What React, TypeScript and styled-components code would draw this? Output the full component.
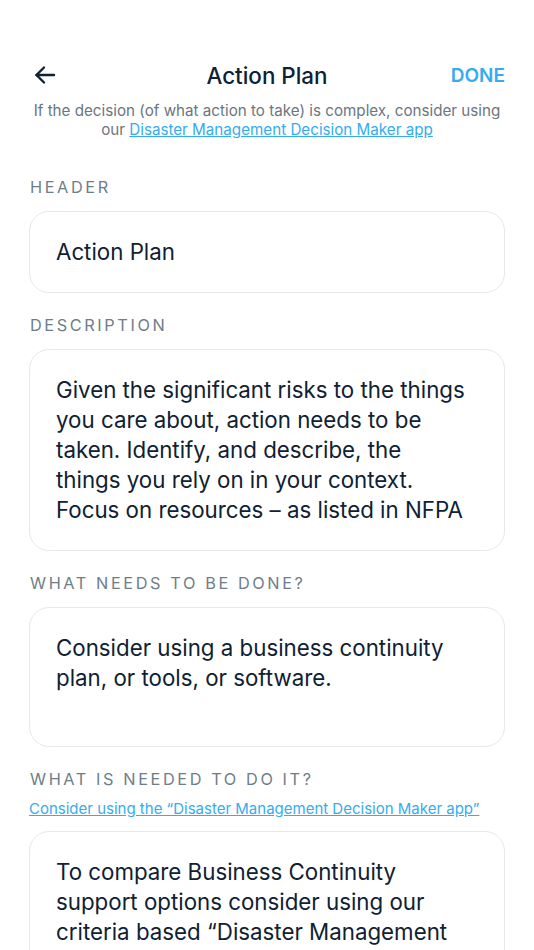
import { FC } from 'react'
import styled, { createGlobalStyle } from 'styled-components'

const GlobalStyle = createGlobalStyle`
  html, body {
    margin: 0;
    padding: 0;
    background: #ffffff;
  }
  body {
    font-family: Inter, 'Noto Sans', sans-serif;
    color: #0f2132;
  }
`

const Page = styled.div`
  width: 534px;
  height: 950px;
  box-sizing: border-box;
  padding: 55px 29px 0;
  overflow: hidden;
`

const TopBar = styled.div`
  display: grid;
  grid-template-columns: 80px 1fr 80px;
  align-items: center;
  height: 40px;
`

const BackButton = styled.button`
  display: flex;
  align-items: center;
  justify-content: flex-start;
  background: none;
  border: none;
  padding: 0 0 0 4px;
  color: #0f2132;
  cursor: pointer;
`

const Title = styled.h1`
  margin: 0;
  text-align: center;
  font-size: 22.4px;
  font-weight: 500;
  color: #0f2132;
`

const DoneButton = styled.button`
  background: none;
  border: none;
  padding: 0;
  text-align: right;
  font-family: inherit;
  font-size: 19px;
  font-weight: 600;
  color: #35acf1;
  cursor: pointer;
`

const Intro = styled.p`
  margin: 6px 0 38px;
  text-align: center;
  font-size: 15.2px;
  line-height: 19px;
  color: #6b7680;
`

const Link = styled.a`
  color: #35acf1;
  text-decoration: underline;
`

const FieldLabel = styled.div`
  margin: 22px 0 14px 1px;
  font-size: 16.3px;
  line-height: 20px;
  letter-spacing: 2.6px;
  text-transform: uppercase;
  color: #6e7e89;
`

const Hint = styled(Link)`
  display: block;
  margin: -4px 0 12px;
  font-size: 15px;
  line-height: 20px;
`

const FieldBox = styled.div<{ $lines?: number }>`
  box-sizing: border-box;
  border: 1.5px solid #e6e8eb;
  border-radius: 20px;
  padding: 25px 34px 25px 26px;
  min-height: ${({ $lines }) => ($lines ? `${$lines * 30 + 50}px` : '81px')};
  font-size: 22.3px;
  line-height: 30px;
  color: #0f2132;
`

const fields = [
  { label: 'Header', text: 'Action Plan', lines: 0 },
  {
    label: 'Description',
    text: 'Given the significant risks to the things you care about, action needs to be taken. Identify, and describe, the things you rely on in your context. Focus on resources – as listed in NFPA',
    lines: 5,
  },
  {
    label: 'What needs to be done?',
    text: 'Consider using a business continuity plan, or tools, or software.',
    lines: 3,
  },
]

const App: FC = () => {
  return (
    <>
      <GlobalStyle />
      <Page>
        <TopBar>
          <BackButton aria-label="Back">
            <svg width="24" height="24" viewBox="0 0 24 24" fill="none" stroke="currentColor" strokeWidth="2.4" strokeLinecap="round" strokeLinejoin="round">
              <path d="M21 12H3.5" />
              <path d="M11 4.5L3.5 12L11 19.5" />
            </svg>
          </BackButton>
          <Title>Action Plan</Title>
          <DoneButton>DONE</DoneButton>
        </TopBar>
        <Intro>
          If the decision (of what action to take) is complex, consider using our{' '}
          <Link href="#">Disaster Management Decision Maker app</Link>
        </Intro>

        {fields.map((f) => (
          <div key={f.label}>
            <FieldLabel>{f.label}</FieldLabel>
            <FieldBox $lines={f.lines}>{f.text}</FieldBox>
          </div>
        ))}

        <FieldLabel>What is needed to do it?</FieldLabel>
        <Hint href="#">Consider using the “Disaster Management Decision Maker app”</Hint>
        <FieldBox $lines={5}>
          To compare Business Continuity support options consider using our criteria based “Disaster Management
          Decision Maker app”.
        </FieldBox>
      </Page>
    </>
  )
}

export default App
